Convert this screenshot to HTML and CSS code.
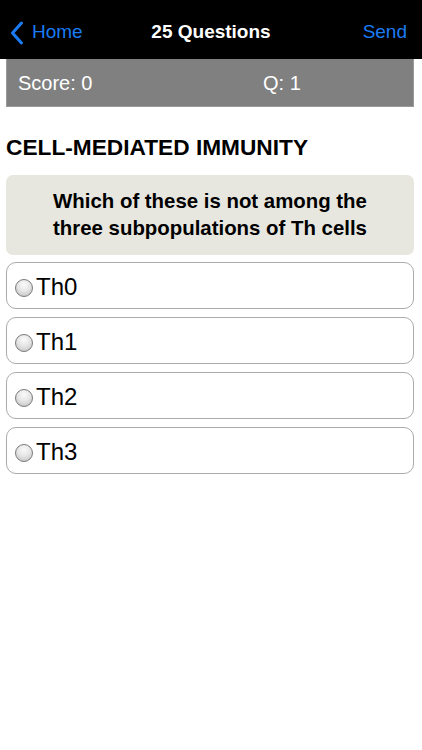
FILE: index.html
```html
<!DOCTYPE html>
<html>
<head>
<meta charset="utf-8">
<link rel="stylesheet" href="styles.css">
</head>
<body>
<div class="nav">
  <div class="nav-left">
    <svg class="chev" width="14" height="24" viewBox="0 0 14 24"><path d="M11.5 2 L2.5 12 L11.5 22" fill="none" stroke="#1a7cf5" stroke-width="3" stroke-linecap="round" stroke-linejoin="round"/></svg>
    <span class="link">Home</span>
  </div>
  <div class="nav-title">25 Questions</div>
  <div class="link send">Send</div>
</div>
<div class="content">
  <div class="scorebar">
    <span class="score">Score: 0</span>
    <span class="qnum">Q: 1</span>
  </div>
  <h1 class="topic">CELL-MEDIATED IMMUNITY</h1>
  <div class="question">Which of these is not among the three subpopulations of Th cells</div>
  <div class="options">
    <div class="option"><span class="radio"></span><span class="label">Th0</span></div>
    <div class="option"><span class="radio"></span><span class="label">Th1</span></div>
    <div class="option"><span class="radio"></span><span class="label">Th2</span></div>
    <div class="option"><span class="radio"></span><span class="label">Th3</span></div>
  </div>
</div>
</body>
</html>
```
FILE: styles.css
```css
* { box-sizing: border-box; }
html, body { margin: 0; padding: 0; background: #fff; }
body { font-family: "Liberation Sans", Arial, sans-serif; width: 422px; height: 750px; }
.nav {
  height: 59px;
  background: #000;
  display: flex;
  align-items: center;
  justify-content: space-between;
  padding: 5px 15px 0 10px;
  position: relative;
}
.nav-left { display: flex; align-items: center; gap: 8px; }
.chev { display: block; margin-top: 1px; }
.link { color: #1a7cf5; font-size: 19px; }
.nav-title {
  position: absolute;
  left: 0; right: 0; top: 5px; bottom: 0;
  display: flex; align-items: center; justify-content: center;
  color: #fff; font-size: 19px; font-weight: bold;
  pointer-events: none;
}
.content { padding: 0 8px 0 6px; }
.scorebar {
  height: 48px;
  background: #808080;
  border: 1px solid #9a9a9a;
  border-top: none;
  display: flex;
  align-items: center;
  color: #fff;
  font-size: 20px;
  padding: 2px 0 0 11px;
}
.score { width: 245px; }
.topic {
  margin: 27px 0 0 0;
  font-size: 22.7px;
  font-weight: bold;
  color: #000;
  line-height: 26px;
  height: 41px;
}
.question {
  background: #e7e7df;
  border-radius: 7px;
  height: 80px;
  display: flex;
  align-items: center;
  justify-content: center;
  text-align: center;
  font-weight: bold;
  font-size: 20.4px;
  line-height: 27px;
  padding: 0 40px;
  color: #000;
}
.options { margin-top: 7px; display: flex; flex-direction: column; gap: 8px; }
.option {
  height: 47px;
  border: 1.5px solid #ababab;
  border-radius: 10px;
  display: flex;
  align-items: center;
  padding: 2px 0 0 8px;
}
.radio {
  width: 18px; height: 18px;
  border-radius: 50%;
  border: 1px solid #7a7a7a;
  background: radial-gradient(circle at 50% 30%, #fafafa 0%, #e6e6e6 45%, #bdbdbd 100%);
  margin-right: 3px;
  margin-top: 2px;
}
.label { font-size: 24px; color: #000; }
```
